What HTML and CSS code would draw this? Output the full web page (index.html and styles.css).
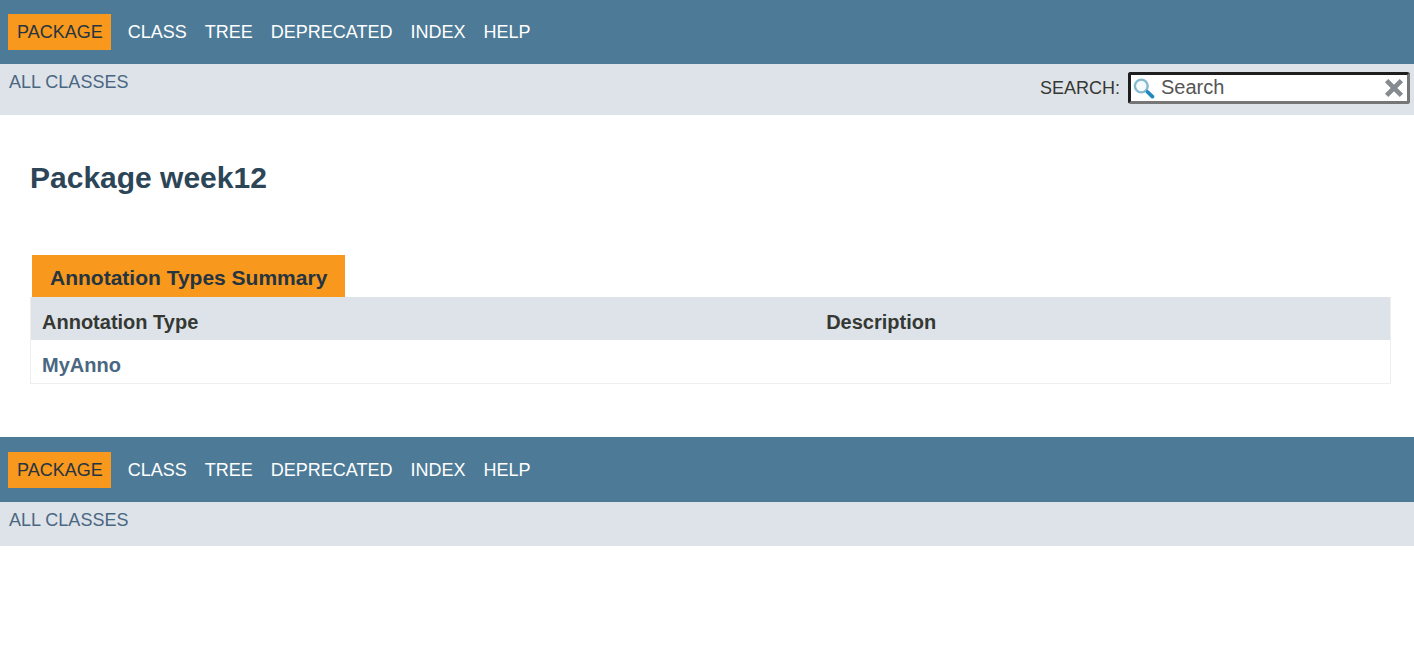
FILE: index.html
```html
<!DOCTYPE html>
<html lang="en">
<head>
<meta charset="utf-8">
<title>week12</title>
<link rel="stylesheet" href="styles.css">
</head>
<body>
<header>
  <nav class="top-nav" aria-label="Main">
    <ul class="nav-list">
      <li class="nav-current">Package</li>
      <li><a href="#">Class</a></li>
      <li><a href="#">Tree</a></li>
      <li><a href="#">Deprecated</a></li>
      <li><a href="#">Index</a></li>
      <li><a href="#">Help</a></li>
    </ul>
  </nav>
  <div class="sub-nav">
    <a class="all-classes" href="#">All Classes</a>
    <form class="search">
      <label for="search">Search:</label>
      <div class="search-box">
        <svg class="glass" viewBox="0 0 22 22" aria-hidden="true">
          <circle cx="8.3" cy="9" r="6.4" fill="#f4fafd" stroke="#84b9cf" stroke-width="2.4"/>
          <path d="M12.6 13.2l2 2" stroke="#7fb5cd" stroke-width="2.4"/>
          <path d="M14.6 15l4.8 4.6" stroke="#2187bd" stroke-width="3.8" stroke-linecap="round"/>
        </svg>
        <input id="search" type="text" placeholder="Search">
        <button class="clear" type="reset" aria-label="Clear">
          <svg viewBox="0 0 20 20" aria-hidden="true"><path d="M2.6 2.6l14.8 14.8M17.4 2.6L2.6 17.4" stroke="#858b8f" stroke-width="4.8"/></svg>
        </button>
      </div>
    </form>
  </div>
</header>
<main>
  <h1>Package week12</h1>
  <table class="summary">
    <caption><span>Annotation Types Summary</span></caption>
    <thead>
      <tr><th class="col-type" scope="col">Annotation Type</th><th scope="col">Description</th></tr>
    </thead>
    <tbody>
      <tr><th scope="row"><a href="#">MyAnno</a></th><td></td></tr>
    </tbody>
  </table>
</main>
<footer>
  <nav class="top-nav" aria-label="Footer">
    <ul class="nav-list">
      <li class="nav-current">Package</li>
      <li><a href="#">Class</a></li>
      <li><a href="#">Tree</a></li>
      <li><a href="#">Deprecated</a></li>
      <li><a href="#">Index</a></li>
      <li><a href="#">Help</a></li>
    </ul>
  </nav>
  <div class="sub-nav">
    <a class="all-classes" href="#">All Classes</a>
  </div>
</footer>
</body>
</html>
```

FILE: styles.css
```css
* {
  box-sizing: border-box;
}

body {
  margin: 0;
  background: #fff;
  color: #353833;
  font-family: "Liberation Sans", Arial, sans-serif;
  font-size: 20px;
}

a {
  color: #4a6782;
  text-decoration: none;
}

.top-nav {
  padding: 14px 8px;
  background: #4d7a97;
  font-size: 18px;
  line-height: 20px;
  text-transform: uppercase;
}

footer .top-nav {
  padding-top: 15px;
}

.nav-list {
  display: flex;
  gap: 18px;
  margin: 0;
  padding: 0;
  list-style: none;
}

.nav-list li {
  padding: 8px 0;
}

.nav-list a {
  color: #fff;
}

.nav-list .nav-current {
  margin-right: -1px;
  padding: 8px 8px 8px 9px;
  background: #f8981d;
  color: #253441;
}

.sub-nav {
  display: flex;
  justify-content: space-between;
  align-items: flex-start;
  padding: 8px 4px 11px 9px;
  background: #dee3e9;
  font-size: 18px;
  line-height: 20px;
  text-transform: uppercase;
}

footer .sub-nav {
  padding-bottom: 16px;
}

.search {
  display: flex;
  align-items: center;
  gap: 8px;
}

.search-box {
  display: flex;
  align-items: center;
  width: 282px;
  height: 32px;
  padding: 0 3px 0 2px;
  border: 3px solid;
  border-color: #1e1e1e #767676 #767676 #1e1e1e;
  border-radius: 3px;
  background: #fff;
}

.glass {
  flex: none;
  width: 22px;
  height: 22px;
}

.search-box input {
  flex: 1;
  min-width: 0;
  padding: 0 0 2px 6px;
  border: 0;
  outline: 0;
  background: none;
  color: #353833;
  font: 20px/24px "Liberation Sans", Arial, sans-serif;
}

.search-box input::placeholder {
  color: #555;
}

.clear {
  flex: none;
  width: 20px;
  height: 20px;
  padding: 0;
  border: 0;
  background: none;
}

.clear svg {
  display: block;
}

main {
  padding: 44px 23px 53px 30px;
}

h1 {
  margin: 0 0 58px;
  color: #2c4557;
  font-size: 30px;
  line-height: 38px;
}

.summary {
  width: 100%;
  border: 1px solid #eee;
  border-top: 0;
  border-spacing: 0;
  table-layout: fixed;
}

.summary caption {
  padding-left: 2px;
  color: #253441;
  font-size: 21px;
  font-weight: bold;
  line-height: 24px;
  text-align: left;
}

.summary caption span {
  display: inline-block;
  padding: 11px 18px 7px;
  background: #f8981d;
  vertical-align: top;
}

.summary th,
.summary td {
  padding: 13px 5px 6px 11px;
  line-height: 24px;
  text-align: left;
}

.summary thead {
  background: #dee3e9;
}

.summary .col-type {
  width: 57.7%;
}
```
